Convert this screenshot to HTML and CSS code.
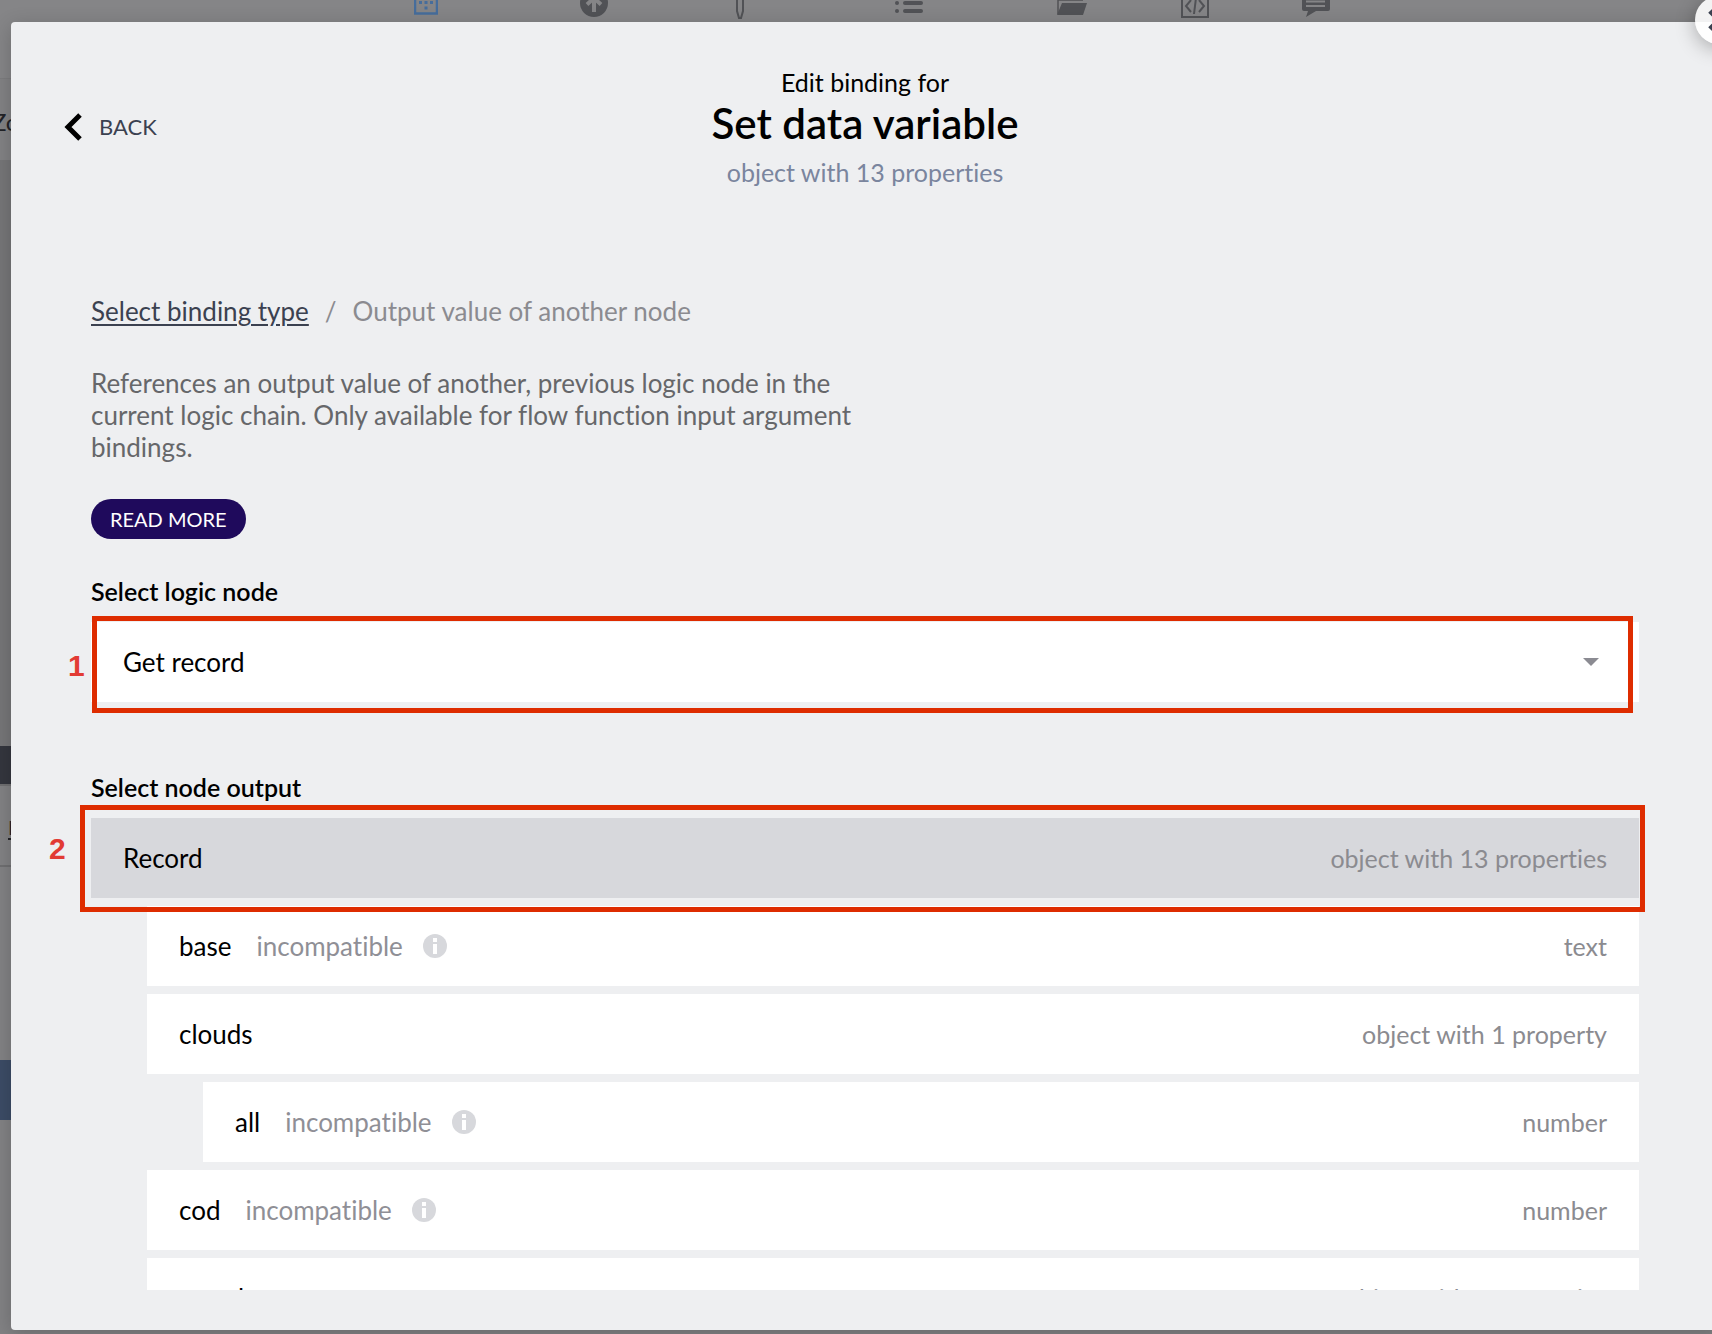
FILE: index.html
```html
<!DOCTYPE html>
<html lang="en">
<head>
<meta charset="utf-8">
<title>Edit binding</title>
<link rel="stylesheet" href="styles.css">
</head>
<body>
<div class="app">
  <nav class="toolbar" aria-label="Editor sections">
    <span></span>
    <svg class="tool tool-active" width="24" height="20" viewBox="0 0 24 20"><path d="M1 0V18.500H23V0" fill="none" stroke="currentColor" stroke-width="2.500"/><path d="M5 6h3v3H5zM10.500 6h3v3h-3zM16 6h3v3h-3zM10.500 11.500h3v3h-3z" fill="currentColor"/></svg>
    <svg class="tool" width="28" height="22" viewBox="0 0 28 22"><circle cx="14" cy="8" r="14" fill="currentColor"/><path d="M14 17V4M7 9.500L14 3l7 6.500" fill="none" stroke="#858587" stroke-width="4"/></svg>
    <svg class="tool" width="8" height="24" viewBox="0 0 8 24"><path d="M1 0V16L3 23H5L7 16V0" fill="none" stroke="currentColor" stroke-width="2"/></svg>
    <svg class="tool" width="28" height="20" viewBox="0 0 28 20"><path d="M10 8H26M10 16H26" stroke="currentColor" stroke-width="4" stroke-linecap="round"/><circle cx="2" cy="8" r="2" fill="currentColor"/><circle cx="2" cy="16" r="2" fill="currentColor"/></svg>
    <svg class="tool" width="30" height="20" viewBox="0 0 30 20"><path d="M1 19V5H26" fill="none" stroke="currentColor" stroke-width="1.500"/><path d="M5 8H30L26 20H0z" fill="currentColor"/></svg>
    <svg class="tool" width="28" height="24" viewBox="0 0 28 24"><path d="M1 0V22H27V0M10 5L5 11l5 6M18 5l5 6-5 6M15 3L13 19" fill="none" stroke="currentColor" stroke-width="2"/></svg>
    <svg class="tool" width="28" height="22" viewBox="0 0 28 22"><path d="M0 0H28V14Q28 16 26 16H14L4 22L6 16H2Q0 16 0 14z" fill="currentColor"/><path d="M4 6.500H23M4 11H23" stroke="#858587" stroke-width="2"/></svg>
  </nav>
  <div class="sidebar">
    <div class="side-top"></div>
    <div class="side-name">Zo</div>
    <div class="side-canvas"></div>
    <div class="side-dark"></div>
    <div class="side-link"><a href="#">P</a></div>
    <div class="side-panel"></div>
    <div class="side-blue"></div>
  </div>
</div>

<main class="modal">
  <button class="close" type="button" aria-label="Close"><svg width="22" height="22" viewBox="0 0 22 22"><path d="M2 2L20 20M20 2L2 20" stroke="#3b4150" stroke-width="5"/></svg></button>
  <header class="header">
    <button class="back" type="button"><svg width="18" height="28" viewBox="0 0 18 28"><path d="M16 2L4 14L16 26" fill="none" stroke="#000" stroke-width="5"/></svg>BACK</button>
    <div class="heading">
      <p class="eyebrow">Edit binding for</p>
      <h1>Set data variable</h1>
      <p class="summary">object with 13 properties</p>
    </div>
  </header>
  <div class="content">
    <nav class="crumbs" aria-label="Breadcrumb"><a href="#">Select binding type</a><span>/</span><span>Output value of another node</span></nav>
    <p class="description">References an output value of another, previous logic node in the current logic chain. Only available for flow function input argument bindings.</p>
    <button class="read-more" type="button">READ MORE</button>
    <label class="label" for="node">Select logic node</label>
    <div class="field">
      <select id="node"><option>Get record</option></select>
      <svg class="caret" width="16" height="8" viewBox="0 0 16 8"><path d="M0 0H16L8 8z" fill="#8b8b92"/></svg>
      <div class="mark mark-node"></div>
      <span class="step step-node">1</span>
    </div>
    <h2 class="label label-output">Select node output</h2>
    <div class="output">
      <ul class="list">
        <li><button class="row selected" type="button"><span>Record</span><span class="type">object with 13 properties</span></button></li>
        <li class="level-1"><button class="row" type="button"><span>base</span><span class="note">incompatible</span><svg class="info" width="24" height="24" viewBox="0 0 24 24"><circle cx="12" cy="12" r="12" fill="#d7d8dc"/><path d="M10 4h4v4h-4zM10 10h4v10h-4z" fill="#fff"/></svg><span class="type">text</span></button></li>
        <li class="level-1"><button class="row" type="button"><span>clouds</span><span class="type">object with 1 property</span></button></li>
        <li class="level-2"><button class="row" type="button"><span>all</span><span class="note">incompatible</span><svg class="info" width="24" height="24" viewBox="0 0 24 24"><circle cx="12" cy="12" r="12" fill="#d7d8dc"/><path d="M10 4h4v4h-4zM10 10h4v10h-4z" fill="#fff"/></svg><span class="type">number</span></button></li>
        <li class="level-1"><button class="row" type="button"><span>cod</span><span class="note">incompatible</span><svg class="info" width="24" height="24" viewBox="0 0 24 24"><circle cx="12" cy="12" r="12" fill="#d7d8dc"/><path d="M10 4h4v4h-4zM10 10h4v10h-4z" fill="#fff"/></svg><span class="type">number</span></button></li>
        <li class="level-1"><button class="row" type="button"><span>coord</span><span class="type">object with 2 properties</span></button></li>
      </ul>
      <div class="mark mark-output"></div>
      <span class="step step-output">2</span>
    </div>
  </div>
</main>
</body>
</html>
```

FILE: styles.css
```css
* { box-sizing: border-box; }

body {
  margin: 0;
  height: 100vh;
  padding: 22px 0 4px 11px;
  overflow: hidden;
  position: relative;
  background: #828284;
  color: #000;
  font-family: Lato, "Open Sans", sans-serif;
  font-size: 26px;
  line-height: 32px;
  font-variant-ligatures: no-common-ligatures;
}

h1, h2, p, ul { margin: 0; padding: 0; }
button, select { font: inherit; color: inherit; border: 0; margin: 0; }
svg { display: block; flex: none; }

/* Dimmed editor behind the dialog */
.app { position: absolute; inset: 0; overflow: hidden; }

.toolbar {
  position: absolute;
  inset: 0 0 auto 0;
  height: 22px;
  display: grid;
  grid-template-columns: 414fr 166fr 156fr 159fr 162fr 124fr 121fr 410fr;
  background: #858587;
  color: #515256;
}
.tool { margin-top: -5px; }
.tool-active { color: #466d9c; }

.sidebar { width: 40px; height: 100%; display: flex; flex-direction: column; }
.side-top { height: 79px; border-bottom: 1px solid #7c7c7e; background: #858587; }
.side-name { height: 81px; padding-top: 27px; text-indent: -8px; background: #828284; color: #222327; font-size: 24px; }
.side-canvas { height: 586px; background: #767678; }
.side-dark { height: 38px; background: #34363e; }
.side-link { height: 83px; padding: 25px 0 0 8px; border-top: 2px solid #6f6f71; border-bottom: 2px solid #6f6f71; background: #828284; font-size: 20px; }
.side-link a { color: #222327; text-underline-offset: 3px; }
.side-panel { height: 193px; }
.side-blue { height: 60px; background: #3c4c66; }

/* Dialog */
.modal {
  position: relative;
  height: 100%;
  margin-right: -7px;
  padding-bottom: 40px;
  display: flex;
  flex-direction: column;
  background: #eeeff1;
  border-radius: 4px;
  box-shadow: 0 4px 20px rgba(0, 0, 0, 0.2);
}

.close {
  position: absolute;
  top: -26px;
  right: -24px;
  width: 48px;
  height: 48px;
  padding: 13px;
  border-radius: 50%;
  background: rgba(255, 255, 255, 0.9);
  box-shadow: 0 4px 20px rgba(0, 0, 0, 0.3);
}

.header {
  display: grid;
  grid-template-columns: 1fr auto 1fr;
  align-items: center;
  padding: 44px 53px 0;
}
.back {
  justify-self: start;
  display: flex;
  align-items: center;
  gap: 17px;
  padding: 0;
  background: none;
  color: #3b4150;
  font-size: 22px;
}
.heading { text-align: center; }
.heading h1 { margin-bottom: 7px; font-size: 42px; line-height: 51px; font-weight: 600; }
.eyebrow { font-size: 25px; }
.summary { color: #7a859e; font-size: 25px; }

.content {
  flex: 1;
  min-height: 0;
  padding: 107px 80px 0;
  display: flex;
  flex-direction: column;
}
.crumbs { display: flex; gap: 16px; color: #8b8b90; }
.crumbs a { color: #3b4150; text-underline-offset: 3px; }
.description { max-width: 768px; margin-top: 40px; color: #66676a; }
.read-more {
  align-self: flex-start;
  height: 40px;
  margin: 36px 0;
  padding: 0 19px;
  border-radius: 20px;
  background: #1f0a5c;
  color: #fff;
  font-size: 20px;
}
.label { font-size: 25px; line-height: 32px; font-weight: 600; }
.label-output { margin-top: 69px; }

.field { position: relative; margin-top: 15px; }
.field select {
  display: block;
  width: 100%;
  height: 80px;
  padding: 0 32px;
  border-radius: 0;
  appearance: none;
  background: #fff;
}
.caret { position: absolute; top: 36px; right: 40px; }

.output { position: relative; flex: 1; min-height: 0; margin-top: 15px; }
.list {
  height: 100%;
  overflow: hidden;
  display: flex;
  flex-direction: column;
  gap: 8px;
  list-style: none;
}
.level-1 { margin-left: 56px; }
.level-2 { margin-left: 112px; }
.row {
  width: 100%;
  height: 80px;
  padding: 0 32px;
  display: flex;
  align-items: center;
  background: #fff;
  text-align: left;
}
.selected { background: #d7d8dc; }
.note { margin-left: 25px; color: #8f8f96; }
.info { margin-left: 20px; }
.type { margin-left: auto; color: #8b8b90; font-size: 25px; }

/* Tutorial annotations */
.mark { position: absolute; border: 5px solid #de2c00; pointer-events: none; }
.mark-node { inset: -6px 6px -11px 1px; }
.mark-output { inset: -13px -6px auto -11px; height: 107px; }
.step {
  position: absolute;
  color: #e23b34;
  font: bold 30px/32px "Liberation Sans", Arial, sans-serif;
}
.step-node { left: -23px; top: 28px; }
.step-output { left: -42px; top: 15px; }
```
